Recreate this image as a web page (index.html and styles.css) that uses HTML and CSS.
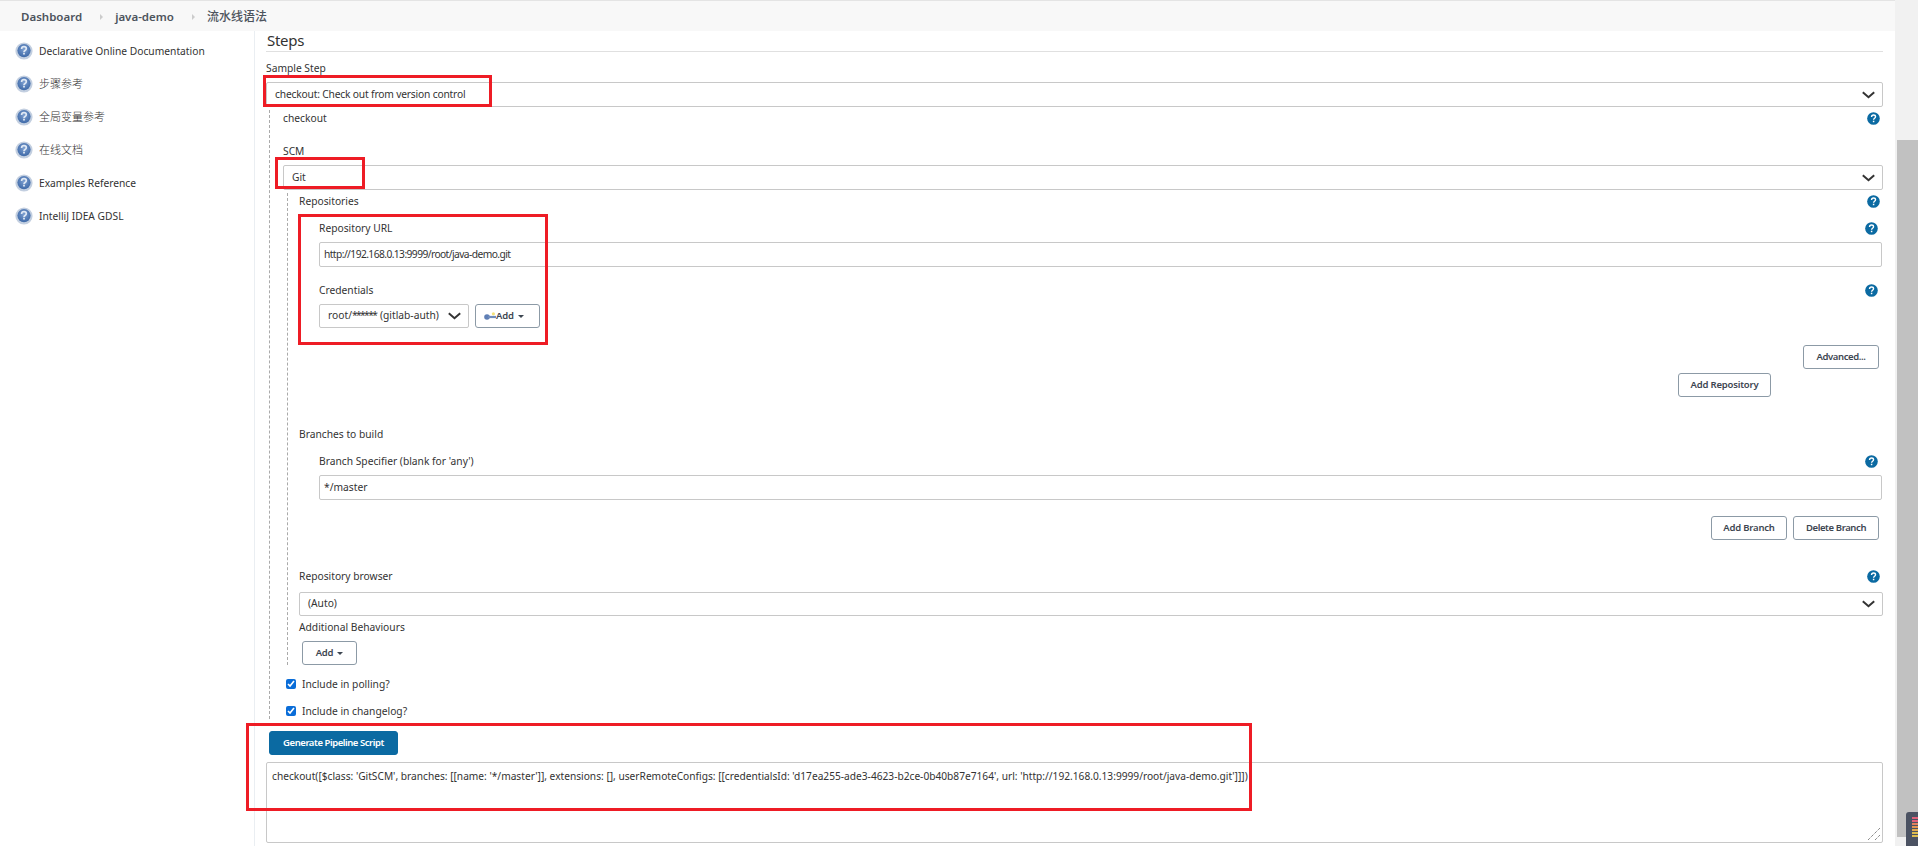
FILE: index.html
```html
<!DOCTYPE html>
<html lang="en">
<head>
<meta charset="utf-8">
<title>流水线语法</title>
<link rel="stylesheet" href="styles.css">
</head>
<body>
<svg width="0" height="0" class="defs">
  <defs>
    <radialGradient id="core" cx="50%" cy="40%" r="60%"><stop offset="0" stop-color="#7d9fd0"/><stop offset="1" stop-color="#3f6aa8"/></radialGradient>
    <g id="help"><circle cx="7" cy="7" r="6.8" fill="#0b6aa2"/><path d="M4.9 5.3c0-1.3 1-2.1 2.2-2.1s2.1.8 2.1 1.9c0 1.7-2.1 1.6-2.1 3.3" fill="none" stroke="#fff" stroke-width="1.5"/><rect x="6.3" y="9.4" width="1.6" height="1.6" fill="#fff"/></g>
    <g id="doc"><circle cx="9" cy="9" r="8.6" fill="#c3cfe0"/><circle cx="9" cy="8.6" r="6.6" fill="url(#core)"/><path d="M6.6 6.9c0-1.4 1.1-2.2 2.4-2.2s2.3.8 2.3 2c0 1.8-2.3 1.7-2.3 3.3" fill="none" stroke="#dfe8f4" stroke-width="1.7"/><rect x="8.1" y="10.7" width="1.8" height="1.8" fill="#dfe8f4"/></g>
    <path id="chev" d="M.8 1.2l5.7 5 5.7-5" fill="none" stroke="#333" stroke-width="2"/>
  </defs>
</svg>
<div class="page">
  <div class="window">
    <nav class="crumbs">
      <span class="crumb">Dashboard</span><span class="sep"></span>
      <span class="crumb">java-demo</span><span class="sep"></span>
      <span class="crumb cjk-crumb">流水线语法</span>
    </nav>
    <div class="body">
      <aside class="side">
        <a class="side-item"><svg class="side-icon" viewBox="0 0 18 18"><use href="#doc"/></svg>Declarative Online Documentation</a>
        <a class="side-item cjk"><svg class="side-icon" viewBox="0 0 18 18"><use href="#doc"/></svg>步骤参考</a>
        <a class="side-item cjk"><svg class="side-icon" viewBox="0 0 18 18"><use href="#doc"/></svg>全局变量参考</a>
        <a class="side-item cjk"><svg class="side-icon" viewBox="0 0 18 18"><use href="#doc"/></svg>在线文档</a>
        <a class="side-item"><svg class="side-icon" viewBox="0 0 18 18"><use href="#doc"/></svg>Examples Reference</a>
        <a class="side-item"><svg class="side-icon" viewBox="0 0 18 18"><use href="#doc"/></svg>IntelliJ IDEA GDSL</a>
      </aside>
      <main class="main">
        <h2 class="title">Steps</h2>
        <div class="row m8 b6"><span>Sample Step</span></div>
        <div class="select"><span class="tight">checkout: Check out from version control</span><svg class="chev" viewBox="0 0 13 8"><use href="#chev"/></svg></div>

        <div class="nest-one">
          <div class="row m3 p3"><span>checkout</span><svg class="help" viewBox="0 0 14 14"><use href="#help"/></svg></div>
          <div class="row m17 b6"><span>SCM</span></div>
          <div class="select"><span>Git</span><svg class="chev" viewBox="0 0 13 8"><use href="#chev"/></svg></div>

          <div class="nest-two">
            <div class="row m3 p3"><span>Repositories</span><svg class="help" viewBox="0 0 14 14"><use href="#help"/></svg></div>
            <div class="inner">
              <div class="row m11 b6 p4"><span>Repository URL</span><svg class="help" viewBox="0 0 14 14"><use href="#help"/></svg></div>
              <div class="input"><span class="url">http://192.168.0.13:9999/root/java-demo.git</span></div>
              <div class="row m15 b6 p4"><span>Credentials</span><svg class="help" viewBox="0 0 14 14"><use href="#help"/></svg></div>
              <div class="cred">
                <div class="select cred-select"><span>root/<span class="stars">******</span> (gitlab-auth)</span><svg class="chev" viewBox="0 0 13 8"><use href="#chev"/></svg></div>
                <button class="btn key-btn"><svg class="key" viewBox="0 0 12 9"><circle cx="9.4" cy="1.8" r="1.6" fill="#f4e27a"/><circle cx="3" cy="5" r="2.8" fill="#5f7fb5"/><rect x="4" y="3.9" width="8" height="2.2" fill="#6f8cbc"/></svg>Add<i class="caret"></i></button>
              </div>
              <div class="actions m17"><button class="btn advanced">Advanced...</button></div>
              <div class="actions m4 add-repo"><button class="btn">Add Repository</button></div>
              <div class="row m29 outdent"><span>Branches to build</span></div>
              <div class="row m11 b6 p4"><span>Branch Specifier (blank for 'any')</span><svg class="help" viewBox="0 0 14 14"><use href="#help"/></svg></div>
              <div class="input"><span>*/master</span></div>
              <div class="actions m16 branch-btns"><button class="btn">Add Branch</button><button class="btn">Delete Branch</button></div>
            </div>
            <div class="row m28 b8 p3"><span>Repository browser</span><svg class="help" viewBox="0 0 14 14"><use href="#help"/></svg></div>
            <div class="select short"><span>(Auto)</span><svg class="chev" viewBox="0 0 13 8"><use href="#chev"/></svg></div>
            <div class="row m3 b6"><span>Additional Behaviours</span></div>
            <button class="btn add-behaviour">Add<i class="caret"></i></button>
          </div>

          <label class="check m11"><input type="checkbox" checked>Include in polling?</label>
          <label class="check m11"><input type="checkbox" checked>Include in changelog?</label>
        </div>

        <button class="btn primary">Generate Pipeline Script</button>
        <div class="output">checkout([$class: 'GitSCM', branches: [[name: '*/master']], extensions: [], userRemoteConfigs: [[credentialsId: 'd17ea255-ade3-4623-b2ce-0b40b87e7164', url: 'http://192.168.0.13:9999/root/java-demo.git']]])<svg class="grip" viewBox="0 0 13 13"><path d="M0 12L12 0M7 12l5-5" stroke="#555" stroke-dasharray="1 1" fill="none"/></svg></div>
      </main>
    </div>
  </div>
  <div class="scrollbar"><div class="thumb"></div></div>
</div>

<div class="mark mark-step"></div>
<div class="mark mark-git"></div>
<div class="mark mark-repo"></div>
<div class="mark mark-gen"></div>

<svg class="widget" viewBox="0 0 12 34"><path d="M3 0H12V34H0V3a3 3 0 0 1 3-3z" fill="#4b5262"/><rect x="6" y="5" width="6" height="2" fill="#e0607a"/><rect x="6" y="8" width="6" height="2" fill="#e0607a"/><rect x="6" y="11" width="6" height="2" fill="#e2805e"/><rect x="6" y="14" width="6" height="2" fill="#e39452"/><rect x="6" y="17" width="6" height="2" fill="#e0a84e"/><rect x="6" y="20" width="6" height="2" fill="#dcbc50"/><rect x="6" y="23" width="6" height="2" fill="#dcbc50"/></svg>
</body>
</html>
```
FILE: styles.css
```css
* { box-sizing: border-box; }
html, body { margin: 0; height: 846px; overflow: hidden; background: #fff; }
body { font: 10.25px/16px "Noto Sans", "Noto Sans CJK SC", sans-serif; color: #333; }
.defs { position: absolute; }
.page { display: flex; height: 846px; }
.window { flex: 1; min-width: 0; display: flex; flex-direction: column; }
.crumbs { height: 31px; flex: none; display: flex; align-items: center; padding: 2px 0 0 21px; background: #f8f8f8; border-top: 1px solid #e4e4e4; font-size: 11.5px; font-weight: 600; color: #4d545d; }
.cjk-crumb { font-size: 12px; font-weight: 500; }
.sep { width: 0; height: 0; margin: 0 12px 0 18px; border-left: 3px solid #ccc; border-top: 3px solid transparent; border-bottom: 3px solid transparent; }
.body { flex: 1; display: flex; min-height: 0; }
.side { width: 255px; flex: none; border-right: 1px solid #eaeef2; padding-top: 3px; }
.side-item { height: 33px; display: flex; align-items: center; padding-left: 15px; color: #333; }
.cjk { font-size: 11px; font-weight: 300; }
.side-icon { width: 18px; height: 18px; margin-right: 6px; flex: none; }
.main { flex: 1; min-width: 0; padding: 0 12px 0 11px; }
.title { margin: 0; height: 21px; border-bottom: 1px solid #e0e0e0; font-size: 15px; line-height: 19px; font-weight: 400; letter-spacing: -.3px; padding-left: 1px; }
.row { height: 16px; display: flex; justify-content: space-between; align-items: center; white-space: nowrap; }
.m3 { margin-top: 3px; } .m4 { margin-top: 4px; } .m8 { margin-top: 8px; } .m11 { margin-top: 11px; }
.m15 { margin-top: 15px; } .m16 { margin-top: 16px; } .m17 { margin-top: 17px; } .m28 { margin-top: 28px; } .m29 { margin-top: 29px; }
.b6 { margin-bottom: 6px; } .b8 { margin-bottom: 8px; }
.p3 { padding-right: 3px; } .p4 { padding-right: 4px; }
.help { width: 13px; height: 13px; flex: none; }
.select, .input, .output { border: 1px solid #c8c8c8; border-radius: 2px; background: #fff; }
.select { height: 25px; display: flex; align-items: center; justify-content: space-between; padding: 0 7px 0 8px; white-space: nowrap; }
.select > span, .input > span { position: relative; top: -1px; }
.tight { letter-spacing: -.18px; }
.url { letter-spacing: -.58px; }
.stars { letter-spacing: -1.6px; margin-right: 1px; }
.select.short { height: 24px; }
.chev { width: 13px; height: 8px; flex: none; }
.nest-one { margin-left: 3px; padding-left: 13px; border-left: 1px dashed #aaa; }
.nest-two { margin-left: 4px; padding-left: 11px; border-left: 1px dashed #aaa; }
.inner { padding-left: 20px; margin-right: 1px; }
.outdent { margin-left: -20px; }
.input { height: 25px; display: flex; align-items: center; padding: 0 4px; }
.cred { display: flex; gap: 6px; }
.cred-select { width: 150px; flex: none; height: 24px; }
.btn { height: 24px; padding: 0 4px; border: 1px solid #8c9aa6; border-radius: 3px; background: #fff; font: 600 9.5px/16px "Noto Sans", sans-serif; letter-spacing: -.2px; color: #3d4651; display: inline-flex; align-items: center; justify-content: center; white-space: nowrap; }
.key-btn { width: 65px; justify-content: flex-start; padding-left: 8px; }
.key { width: 12px; height: 9px; flex: none; }
.caret { width: 0; height: 0; margin-left: 4px; border-top: 3px solid #3d4651; border-left: 3px solid transparent; border-right: 3px solid transparent; }
.actions { display: flex; justify-content: flex-end; gap: 6px; padding-right: 3px; }
.advanced { width: 76px; letter-spacing: -.4px; }
.add-repo { padding-right: 111px; }
.add-repo .btn { width: 93px; }
.branch-btns .btn:first-child { width: 76px; }
.branch-btns .btn:last-child { width: 86px; letter-spacing: -.4px; }
.add-behaviour { width: 55px; margin-left: 3px; display: flex; }
.check { height: 16px; display: flex; align-items: center; margin-left: 3px; white-space: nowrap; }
.check input { width: 10px; height: 10px; margin: 0 6px 0 0; accent-color: #0a6dd8; }
.primary { display: flex; margin: 12px 0 0 3px; width: 129px; background: #0b6aa2; border-color: #0b6aa2; color: #fff; letter-spacing: -.45px; }
.output { position: relative; height: 81px; margin-top: 7px; padding: 5px; white-space: nowrap; font-size: 10.19px; }
.grip { position: absolute; right: 1px; bottom: 1px; width: 13px; height: 13px; }
.scrollbar { width: 23px; flex: none; height: 846px; background: #f1f1f1; padding: 140px 0 9px 2px; }
.thumb { height: 100%; background: #c1c1c1; }
.mark { position: absolute; border: 3px solid #ee1c25; pointer-events: none; }
.mark-step { left: 263px; top: 75px; width: 229px; height: 32px; }
.mark-git { left: 275px; top: 157px; width: 90px; height: 32px; }
.mark-repo { left: 298px; top: 214px; width: 250px; height: 131px; }
.mark-gen { left: 246px; top: 723px; width: 1006px; height: 88px; }
.widget { position: absolute; left: 1906px; top: 812px; width: 12px; height: 34px; }
```
